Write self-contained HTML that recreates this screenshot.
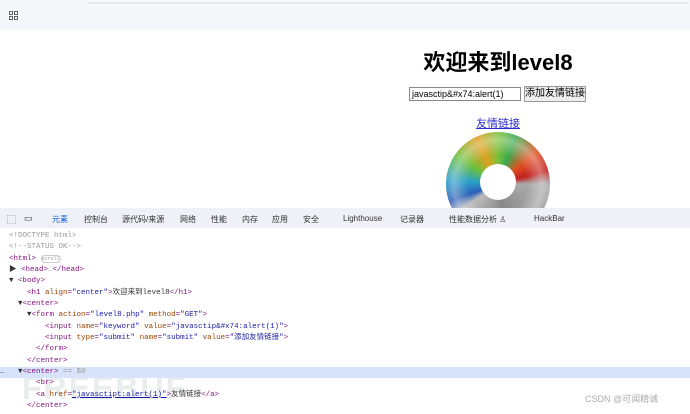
<!DOCTYPE html>
<html><head><meta charset="utf-8"><style>
*{margin:0;padding:0;box-sizing:border-box}
body{width:690px;height:414px;overflow:hidden;background:#fff;font-family:"Liberation Sans","Noto Sans CJK SC",sans-serif;position:relative}
.top{position:absolute;left:0;top:0;width:690px;height:30px;background:#f6f7fa}
.tl{position:absolute;left:88px;top:2px;width:600px;height:2px;background:#e6e8ee}
.ic{position:absolute;left:9px;top:11px;width:10px;height:10px}
.ic i{position:absolute;width:4px;height:4px;border:1px solid #666}
h1{position:absolute;left:398px;width:200px;text-align:center;top:45px;font-size:22px;font-weight:bold;color:#000}
.inp{position:absolute;left:409px;top:87px;width:112px;height:14px;border:1px solid #888;font-size:9px;padding-left:2px;line-height:12px}
.btn{position:absolute;left:524px;top:86px;width:62px;height:16px;border:1px solid #999;background:#eee;font-size:10px;text-align:center;line-height:14px}
.lk{position:absolute;left:476px;top:115px;font-size:11px;color:#2a2ad0;text-decoration:underline}
.clip{position:absolute;left:446px;top:132px;width:104px;height:76px;overflow:hidden}
.img{position:absolute;left:0;top:0;width:104px;height:104px;border-radius:50%;background:conic-gradient(from 250deg,#2a5fb8 0deg,#29a0c8 25deg,#6bbf3a 55deg,#e0a020 85deg,#7cc03a 110deg,#3caa50 130deg,#e05020 160deg,#c02020 185deg,#aaa 200deg,#888 280deg,#bbb 345deg,#2a5fb8 360deg);overflow:hidden}
.img:before{content:"";position:absolute;left:0;top:0;width:104px;height:104px;border-radius:50%;background:radial-gradient(circle,transparent 40%,rgba(255,255,255,.35) 60%,transparent 75%)}
.img:after{content:"";position:absolute;left:34px;top:32px;width:36px;height:36px;border-radius:50%;background:#fff}
.bar{position:absolute;left:0;top:208px;width:690px;height:20px;background:#eef1f8;font-size:8px;color:#333;z-index:2}
.bar span{position:absolute;top:6px}
.code{position:absolute;left:0;top:231px;width:690px;font-family:"Liberation Mono","Noto Sans CJK SC",monospace;font-size:7.5px;line-height:11.35px;color:#881280;z-index:2}
.code div{height:11.35px;white-space:pre}
.hl{background:#d6e3fb}
.g{color:#999}.v{color:#1a1aa6}.a{color:#994500}.t{color:#333}
.wm{position:absolute;left:585px;top:392px;font-size:9px;color:#aaa}
.fb{position:absolute;left:22px;top:370px;font-size:32px;font-weight:bold;color:#e8eeec;letter-spacing:2px;z-index:1}
</style></head><body>
<div class="top"><div class="tl"></div>
<div class="ic"><i style="left:0;top:0"></i><i style="left:5px;top:0"></i><i style="left:0;top:5px"></i><i style="left:5px;top:5px"></i></div></div>
<h1>欢迎来到level8</h1>
<div class="inp">javasctip&amp;#x74:alert(1)</div>
<div class="btn">添加友情链接</div>
<div class="lk">友情链接</div>
<div class="clip"><div class="img"></div></div>
<div class="bar">
<span style="left:7px;top:5px;font-size:9px">⬚</span><span style="left:24px;top:5px;font-size:9px">▭</span>
<span style="left:52px;color:#1a5fd0">元素</span><span style="left:84px">控制台</span><span style="left:122px">源代码/来源</span><span style="left:180px">网络</span><span style="left:211px">性能</span><span style="left:242px">内存</span><span style="left:272px">应用</span><span style="left:303px">安全</span><span style="left:343px">Lighthouse</span><span style="left:400px">记录器</span><span style="left:449px">性能数据分析 ♙</span><span style="left:534px">HackBar</span>
</div>
<div class="fb">FREEBUF</div>
<div class="code">
<div class="g">  &lt;!DOCTYPE html&gt;</div>
<div class="g">  &lt;!--STATUS OK--&gt;</div>
<div>  &lt;html&gt; <span class="g" style="border:1px solid #ccc;border-radius:4px;font-size:5px">scroll</span></div>
<div><span class="t">  ▶</span> &lt;head&gt;<span class="g">…</span>&lt;/head&gt;</div>
<div><span class="t">  ▼</span> &lt;body&gt;</div>
<div>      &lt;h1 <span class="a">align</span>=<span class="v">"center"</span>&gt;<span class="t">欢迎来到level8</span>&lt;/h1&gt;</div>
<div><span class="t">    ▼</span>&lt;center&gt;</div>
<div><span class="t">      ▼</span>&lt;form <span class="a">action</span>=<span class="v">"level8.php"</span> <span class="a">method</span>=<span class="v">"GET"</span>&gt;</div>
<div>          &lt;input <span class="a">name</span>=<span class="v">"keyword"</span> <span class="a">value</span>=<span class="v">"javasctip&amp;#x74:alert(1)"</span>&gt;</div>
<div>          &lt;input <span class="a">type</span>=<span class="v">"submit"</span> <span class="a">name</span>=<span class="v">"submit"</span> <span class="a">value</span>=<span class="v">"添加友情链接"</span>&gt;</div>
<div>        &lt;/form&gt;</div>
<div>      &lt;/center&gt;</div>
<div class="hl"><span class="t">…   ▼</span>&lt;center&gt; <span class="g">== $0</span></div>
<div>        &lt;br&gt;</div>
<div>        &lt;a <span class="a">href</span>=<span class="v" style="text-decoration:underline">"javasctipt:alert(1)"</span>&gt;<span class="t">友情链接</span>&lt;/a&gt;</div>
<div>      &lt;/center&gt;</div>
</div>
<div class="wm">CSDN @可闻精诚</div>
</body></html>
